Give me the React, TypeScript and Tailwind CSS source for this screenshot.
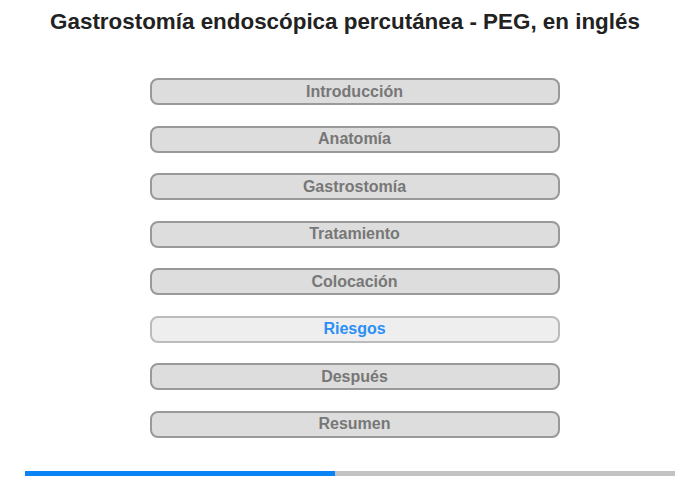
import React from "react";

const items = [
  "Introducción",
  "Anatomía",
  "Gastrostomía",
  "Tratamiento",
  "Colocación",
  "Riesgos",
  "Después",
  "Resumen",
];

export default function App() {
  return (
    <div
      className="w-[700px] h-[480px] bg-white relative"
      style={{ fontFamily: '"Liberation Sans", Arial, sans-serif' }}
    >
      <h1 className="pt-[9px] pr-[10px] h-[26px] box-content text-center text-[22.4px] leading-[26px] font-bold text-[#222222]">
        Gastrostomía endoscópica percutánea - PEG, en inglés
      </h1>
      <div className="flex flex-col items-center gap-[20.5px] mt-[43px] pl-[9px]">
        {items.map((t) => {
          const active = t === "Riesgos";
          return (
            <div
              key={t}
              className={
                active
                  ? "w-[410px] h-[27px] rounded-[8px] border-2 border-[#bbbbbb] bg-[#eeeeee] flex items-center justify-center text-[16px] font-bold text-[#2a8ff7]"
                  : "w-[410px] h-[27px] rounded-[8px] border-2 border-[#999999] bg-[#dddddd] flex items-center justify-center text-[16px] font-bold text-[#777777]"
              }
            >
              {t}
            </div>
          );
        })}
      </div>
      <div className="flex mx-[25px] mt-[33px] h-[5px] bg-[#c3c3c3]">
        <div className="w-[310px] h-full bg-[#0a84f5]" />
      </div>
    </div>
  );
}
